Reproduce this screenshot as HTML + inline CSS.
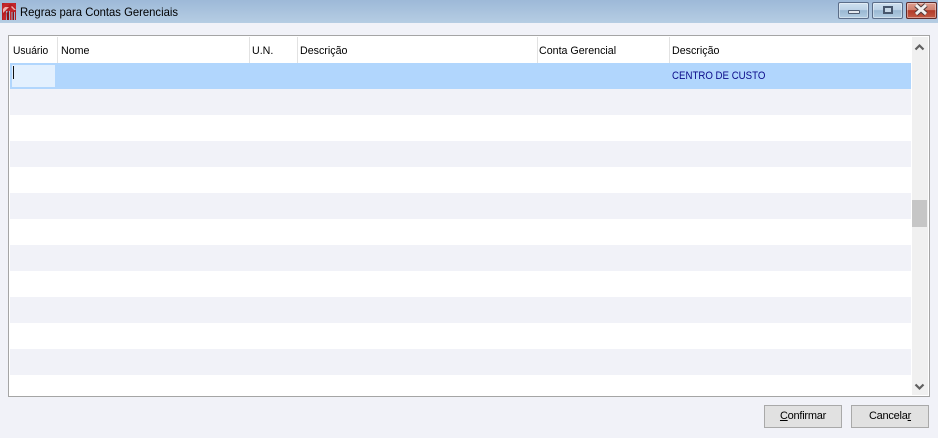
<!DOCTYPE html>
<html><head><meta charset="utf-8"><style>
html,body{margin:0;padding:0}
body{width:938px;height:438px;overflow:hidden;background:#f1f2f8;position:relative;font-family:"Liberation Sans",sans-serif;font-size:11px;color:#000}
div,span{position:absolute;white-space:nowrap}
#tb{left:0;top:0;width:938px;height:23px;background:linear-gradient(#9db9d8,#b6cde3)}
.wb{top:2px;height:15px;border:1px solid #5b6d88;border-radius:2px;background:linear-gradient(#cfe0ef 0,#bcd2e6 45%,#9ab8d2 50%,#b3cde2 100%);box-shadow:inset 0 0 0 1px rgba(255,255,255,.4)}
#grid{left:8px;top:35px;width:920px;height:360px;border:1px solid #a5a5a5;background:#fff}
.h{top:9px;line-height:13px;color:#000;font-size:11px;transform-origin:0 0;transform:scaleX(.97)}
.sep{top:1px;width:1px;height:26px;background:#e2e2e2}
.row{left:1px;width:901px;height:26px;background:#f1f2f8}
.btn{top:405px;height:21px;border:1px solid #a9a9a9;background:#e1e1e1;text-align:center;line-height:21px;font-size:11px;color:#000;letter-spacing:-.25px}
</style></head><body>
<div id="tb"></div>
<svg style="position:absolute;left:2px;top:2px" width="15" height="18" viewBox="0 0 15 18"><path d="M0 1H14V18H0Z" fill="#c3262b"/><path d="M0 1H3L0 4ZM13 1H14V2ZM14 7V18H13V9L10 5 4 11 1 14V18H0V9L8 2H10L14 7Z" fill="#b51d22"/><path d="M3 5H7L1 11V7Z" fill="#eeb0b0"/><path d="M10 4 14 8H12L9 5Z" fill="#eeb0b0"/><path d="M4 9H5.5V18H4ZM7 9H8V18H7ZM9.5 10H10.5V18H9.5ZM12 10H13V18H12Z" fill="#9ab4cf"/><path d="M4.5 11 7 9V18H5ZM10.500 11 12 9V18H10.500Z" fill="#8f0f15"/></svg>
<div style="left:20px;top:5px;font-size:12px;line-height:14px;color:#000;transform-origin:0 0;transform:scaleX(.94)">Regras para Contas Gerenciais</div>
<div class="wb" style="left:838px;width:29px"></div>
<div style="left:848px;top:10px;width:10px;height:2px;background:#e3e8ee;border:1px solid #4d5b70;border-radius:1px"></div>
<div class="wb" style="left:872px;width:29px"></div>
<div style="left:883px;top:6px;width:6px;height:4px;background:#c6d7e6;border:2px solid #46566c"></div>
<div class="wb" style="left:906px;width:29px;border-color:#5d2a2a;background:linear-gradient(#dd9d8e 0,#d0806f 45%,#b23a28 50%,#c25a45 100%)"></div>
<svg style="position:absolute;left:913px;top:3px" width="16" height="13" viewBox="0 0 16 13"><path d="M3 2 13 11M13 2 3 11" stroke="#4f3a3a" stroke-width="5"/><path d="M3 2 13 11M13 2 3 11" stroke="#f1efef" stroke-width="3"/></svg>

<div id="grid">
<div class="h" style="left:4px;transform:scaleX(.93)">Usuário</div>
<div class="sep" style="left:48px"></div>
<div class="h" style="left:52px">Nome</div>
<div class="sep" style="left:240px"></div>
<div class="h" style="left:243px">U.N.</div>
<div class="sep" style="left:288px"></div>
<div class="h" style="left:291px">Descrição</div>
<div class="sep" style="left:528px"></div>
<div class="h" style="left:530px">Conta Gerencial</div>
<div class="sep" style="left:660px"></div>
<div class="h" style="left:663px">Descrição</div>

<div class="row" style="top:27px;background:#b1d6fd"></div>
<div style="left:3px;top:29px;width:43px;height:22px;background:#e3f0fe"></div>
<div style="left:4px;top:30px;width:1px;height:13px;background:#111"></div>
<div style="left:663px;top:34px;line-height:13px;font-size:11px;color:#0b0b8a;transform-origin:0 0;transform:scaleX(.88)">CENTRO DE CUSTO</div>

<div class="row" style="top:53px"></div>
<div class="row" style="top:105px"></div>
<div class="row" style="top:157px"></div>
<div class="row" style="top:209px"></div>
<div class="row" style="top:261px"></div>
<div class="row" style="top:313px"></div>

<div style="left:903px;top:1px;width:16px;height:358px;background:#f0f0f0"></div>
<div style="left:903px;top:164px;width:15px;height:27px;background:#c6c6c6"></div>
<svg style="position:absolute;left:905px;top:7px" width="11" height="8" viewBox="0 0 11 8"><path d="M1.5 6.5 5.500 2.500 9.500 6.500" fill="none" stroke="#606060" stroke-width="2.2"/></svg>
<svg style="position:absolute;left:905px;top:347px" width="11" height="8" viewBox="0 0 11 8"><path d="M1.5 1.500 5.500 5.500 9.500 1.500" fill="none" stroke="#606060" stroke-width="2.2"/></svg>
</div>

<div class="btn" style="left:764px;width:76px"><u>C</u>onfirmar</div>
<div class="btn" style="left:851px;width:76px">Cancela<u>r</u></div>
</body></html>
